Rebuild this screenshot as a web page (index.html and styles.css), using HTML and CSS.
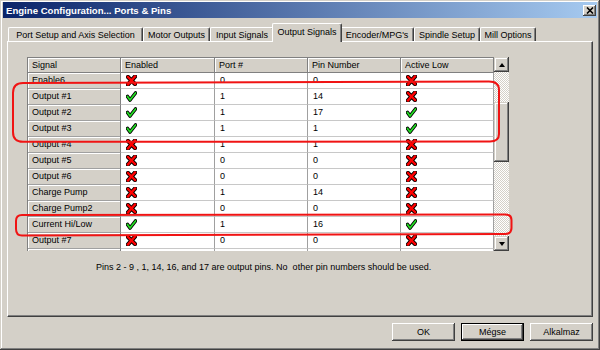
FILE: index.html
```html
<!DOCTYPE html>
<html lang="en">
<head>
    <meta charset="UTF-8">
    <title>Engine Configuration... Ports &amp; Pins</title>
    <link rel="stylesheet" href="styles.css">
</head>
<body>
    <!-- shared icons for the grid cells -->
    <svg class="defs" width="0" height="0">
        <defs>
            <symbol id="icon-no" viewBox="0 0 11 11">
                <path d="M2 2 L9 9 M9 1.5 L2 9.5" stroke="#000" stroke-width="4.2" stroke-linecap="square" fill="none"/>
                <path d="M2 2 L9 9 M9 1.5 L2 9.5" stroke="#f00" stroke-width="2.4" stroke-linecap="square" fill="none"/>
            </symbol>
            <symbol id="icon-yes" viewBox="0 0 11 11">
                <path d="M1.5 5.5 L4 9 L9.5 2" stroke="#000" stroke-width="3.6" stroke-linecap="round" stroke-linejoin="round" fill="none"/>
                <path d="M1.5 5.5 L4 9 L9.5 2" stroke="#22dd22" stroke-width="1.8" stroke-linecap="round" stroke-linejoin="round" fill="none"/>
            </symbol>
        </defs>
    </svg>

    <div class="window">
        <div class="titlebar">
            <span class="title">Engine Configuration... Ports &amp; Pins</span>
            <span class="close-btn">
                <svg width="8" height="7" viewBox="0 0 8 7"><path d="M1 0.5 L7 6.5 M7 0.5 L1 6.5" stroke="#000" stroke-width="1.6"/></svg>
            </span>
        </div>

        <div class="tabs">
            <div class="tab tab-port">Port Setup and Axis Selection</div>
            <div class="tab tab-motor">Motor Outputs</div>
            <div class="tab tab-input">Input Signals</div>
            <div class="tab tab-output active">Output Signals</div>
            <div class="tab tab-encoder">Encoder/MPG's</div>
            <div class="tab tab-spindle">Spindle Setup</div>
            <div class="tab tab-mill">Mill Options</div>
        </div>

        <div class="panel">
            <div class="grid">
                <div class="grid-view">
                    <table class="signals">
                        <colgroup>
                            <col class="col-signal">
                            <col class="col-enabled">
                            <col class="col-port">
                            <col class="col-pin">
                            <col class="col-low">
                        </colgroup>
                        <thead>
                            <tr><th>Signal</th><th>Enabled</th><th>Port #</th><th>Pin Number</th><th>Active Low</th></tr>
                        </thead>
                        <tbody>
                            <tr><td class="sig">Enable6</td><td><svg class="icon"><use href="#icon-no"/></svg></td><td>0</td><td>0</td><td><svg class="icon"><use href="#icon-no"/></svg></td></tr>
                            <tr><td class="sig">Output #1</td><td><svg class="icon"><use href="#icon-yes"/></svg></td><td>1</td><td>14</td><td><svg class="icon"><use href="#icon-no"/></svg></td></tr>
                            <tr><td class="sig">Output #2</td><td><svg class="icon"><use href="#icon-yes"/></svg></td><td>1</td><td>17</td><td><svg class="icon"><use href="#icon-yes"/></svg></td></tr>
                            <tr><td class="sig">Output #3</td><td><svg class="icon"><use href="#icon-yes"/></svg></td><td>1</td><td>1</td><td><svg class="icon"><use href="#icon-yes"/></svg></td></tr>
                            <tr><td class="sig">Output #4</td><td><svg class="icon"><use href="#icon-no"/></svg></td><td>1</td><td>1</td><td><svg class="icon"><use href="#icon-no"/></svg></td></tr>
                            <tr><td class="sig">Output #5</td><td><svg class="icon"><use href="#icon-no"/></svg></td><td>0</td><td>0</td><td><svg class="icon"><use href="#icon-no"/></svg></td></tr>
                            <tr><td class="sig">Output #6</td><td><svg class="icon"><use href="#icon-no"/></svg></td><td>0</td><td>0</td><td><svg class="icon"><use href="#icon-no"/></svg></td></tr>
                            <tr><td class="sig">Charge Pump</td><td><svg class="icon"><use href="#icon-no"/></svg></td><td>1</td><td>14</td><td><svg class="icon"><use href="#icon-no"/></svg></td></tr>
                            <tr><td class="sig">Charge Pump2</td><td><svg class="icon"><use href="#icon-no"/></svg></td><td>0</td><td>0</td><td><svg class="icon"><use href="#icon-no"/></svg></td></tr>
                            <tr><td class="sig">Current Hi/Low</td><td><svg class="icon"><use href="#icon-yes"/></svg></td><td>1</td><td>16</td><td><svg class="icon"><use href="#icon-yes"/></svg></td></tr>
                            <tr><td class="sig">Output #7</td><td><svg class="icon"><use href="#icon-no"/></svg></td><td>0</td><td>0</td><td><svg class="icon"><use href="#icon-no"/></svg></td></tr>
                            <!-- only the top edge of the next row shows -->
                            <tr><td class="sig"></td><td><svg class="icon"><use href="#icon-no"/></svg></td><td></td><td></td><td><svg class="icon"><use href="#icon-no"/></svg></td></tr>
                        </tbody>
                    </table>
                </div>
                <div class="scrollbar">
                    <div class="sb-btn"><span class="arrow-up"></span></div>
                    <div class="sb-track"><div class="sb-thumb"></div></div>
                    <div class="sb-btn"><span class="arrow-down"></span></div>
                </div>
            </div>
            <p class="note">Pins 2 - 9 , 1, 14, 16, and 17 are output pins. No &nbsp;other pin numbers should be used.</p>
        </div>

        <div class="buttons">
            <button class="btn">OK</button>
            <button class="btn btn-default">Mégse</button>
            <button class="btn">Alkalmaz</button>
        </div>

        <!-- red hand-drawn highlights over the grid -->
        <svg class="marks" width="600" height="350" viewBox="0 0 600 350">
            <path d="M23 83 L489 81.5 Q499 81.5 499 90 L499 134 Q499 141.5 490 141.5 L23 141.8 Q13 141.8 13 132 L13 93 Q13 83 23 83 Z" fill="none" stroke="#f01414" stroke-width="2"/>
            <path d="M22 215 L505 214.5 Q511.5 214.5 511.5 220 L511.5 228 Q511.5 234 505 234 L22 235.5 Q16 235.5 16 229 L16 221 Q16 215 22 215 Z" fill="none" stroke="#f01414" stroke-width="2"/>
        </svg>
    </div>
</body>
</html>
```

FILE: styles.css
```css
body {
    margin: 0;
    background-color: #d4d0c8;
    font-family: 'Liberation Sans', Arial, sans-serif;
    font-size: 9px;
    color: #000;
}
.defs {
    position: absolute;
}
.window {
    position: relative;
    width: 600px;
    height: 350px;
    box-sizing: border-box;
    padding: 2px 3px 3px;
    background-color: #d4d0c8;
    box-shadow: inset -1px -1px #404040, inset 1px 1px #d4d0c8, inset -2px -2px #808080, inset 2px 2px #fff;
    overflow: hidden;
}
.titlebar {
    height: 16px;
    display: flex;
    align-items: center;
    justify-content: space-between;
    padding: 0 1px 0 3px;
    background: linear-gradient(to right, #0a246a, #a6caf0);
    color: #fff;
    font-weight: bold;
    font-size: 9.6px;
}
.close-btn {
    width: 13px;
    height: 11px;
    display: flex;
    align-items: center;
    justify-content: center;
    background-color: #d4d0c8;
    box-shadow: inset -1px -1px #404040, inset 1px 1px #fff, inset -2px -2px #808080;
}

/* tab strip */
.tabs {
    height: 23px;
    display: flex;
    align-items: flex-end;
    padding-left: 5px;
}
.tab {
    box-sizing: border-box;
    height: 14px;
    display: flex;
    align-items: center;
    justify-content: center;
    white-space: nowrap;
    border-top: 1px solid #fff;
    border-left: 1px solid #fff;
    border-right: 1px solid #404040;
    border-radius: 2px 2px 0 0;
    box-shadow: inset -1px 0 #808080;
}
.tab.active {
    position: relative;
    z-index: 1;
    height: 19px;
    margin: 0 -2px -1px;
    padding-bottom: 2px;
    background-color: #d4d0c8;
}
.tab-port { width: 135px; }
.tab-motor { width: 67px; }
.tab-input { width: 64px; }
.tab-output { width: 70px; }
.tab-encoder { width: 74px; }
.tab-spindle { width: 66px; }
.tab-mill { width: 56px; }

.panel {
    box-sizing: border-box;
    height: 276px;
    margin: 0 4px;
    padding: 15px 0 0 19px;
    border-top: 1px solid #fff;
    border-left: 1px solid #fff;
    border-right: 1px solid #404040;
    border-bottom: 1px solid #404040;
    box-shadow: inset -1px -1px #808080;
}

/* signal grid */
.grid {
    display: flex;
    width: 482px;
    height: 194px;
}
.grid-view {
    width: 466px;
    overflow: hidden;
    border-top: 1px solid #808080;
    border-left: 1px solid #808080;
}
.signals {
    width: 466px;
    table-layout: fixed;
    border-collapse: separate;
    border-spacing: 0;
    font-size: 9px;
}
.col-signal { width: 93px; }
.col-enabled { width: 94px; }
.col-port { width: 93px; }
.col-pin { width: 93px; }
.col-low { width: 93px; }
.signals th {
    height: 14px;
    padding: 0 4px;
    line-height: 14px;
    text-align: left;
    font-weight: normal;
    background-color: #d4d0c8;
    border-right: 1px solid #808080;
    border-bottom: 1px solid #808080;
    box-shadow: inset 1px 1px #fff;
}
.signals tbody tr {
    height: 16px;
}
.signals td {
    padding: 0 4px 0 5px;
    line-height: 15px;
    white-space: nowrap;
    overflow: hidden;
    background-color: #fff;
    border-right: 1px solid #a0a0a0;
    border-bottom: 1px solid #c8c8c8;
}
.signals td.sig {
    padding-left: 4px;
    background-color: #d4d0c8;
    border-right: 1px solid #808080;
    border-bottom: 1px solid #a0a0a0;
    box-shadow: inset 1px 1px #fff;
}
.icon {
    display: block;
    width: 11px;
    height: 11px;
}

/* vertical scrollbar */
.scrollbar {
    width: 15px;
    display: flex;
    flex-direction: column;
}
.sb-btn {
    height: 15px;
    display: flex;
    align-items: center;
    justify-content: center;
    background-color: #d4d0c8;
    box-shadow: inset -1px -1px #404040, inset 1px 1px #d4d0c8, inset -2px -2px #808080, inset 2px 2px #fff;
}
.arrow-up {
    border-left: 3.5px solid transparent;
    border-right: 3.5px solid transparent;
    border-bottom: 4px solid #000;
}
.arrow-down {
    border-left: 3.5px solid transparent;
    border-right: 3.5px solid transparent;
    border-top: 4px solid #000;
}
.sb-track {
    flex: 1;
    background: repeating-conic-gradient(#fff 0 25%, #d4d0c8 0 50%) 0 0 / 2px 2px;
}
.sb-thumb {
    height: 60px;
    margin-top: 30px;
    background-color: #d4d0c8;
    box-shadow: inset -1px -1px #404040, inset 1px 1px #d4d0c8, inset -2px -2px #808080, inset 2px 2px #fff;
}

.note {
    margin: 10px 0 0 69px;
    line-height: 12px;
    white-space: pre;
}

/* dialog buttons */
.buttons {
    display: flex;
    justify-content: flex-end;
    gap: 6px;
    margin-top: 6px;
    padding-right: 4px;
}
.btn {
    width: 63px;
    height: 18px;
    padding: 0;
    border: none;
    font-family: inherit;
    font-size: 9px;
    color: #000;
    background-color: #d4d0c8;
    box-shadow: inset -1px -1px #404040, inset 1px 1px #fff, inset -2px -2px #808080;
}
.btn-default {
    box-shadow: inset 0 0 0 1px #000, inset -2px -2px #404040, inset 2px 2px #fff, inset -3px -3px #808080;
}

.marks {
    position: absolute;
    top: 0;
    left: 0;
    pointer-events: none;
}
```
